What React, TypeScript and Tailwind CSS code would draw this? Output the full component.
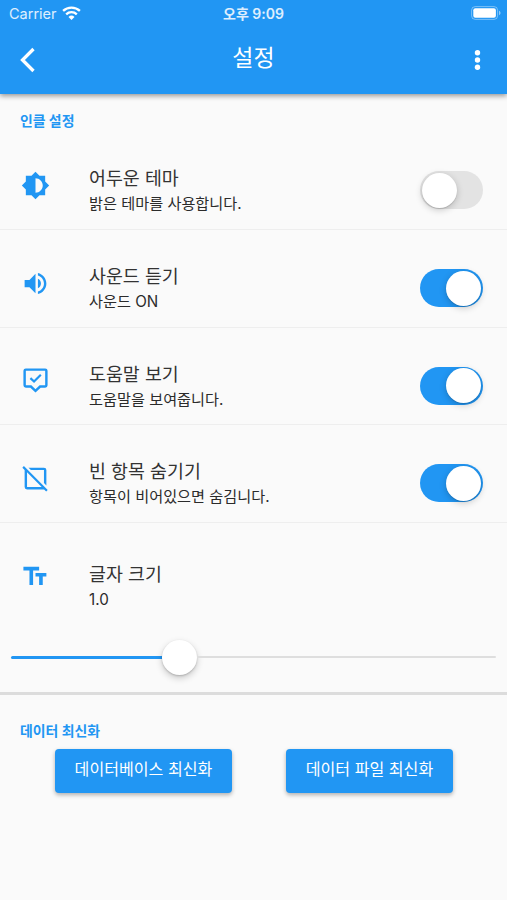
import { ReactNode, useState } from "react";
import clsx from "clsx";
import { MdBrightness6, MdVolumeUp } from "react-icons/md";

function TooltipCheckIcon() {
    return (
        <svg viewBox="0 0 24 24" className="size-[29px]" fill="none" stroke="currentColor" strokeWidth="2">
            <path d="M4 2.2h16a1 1 0 0 1 1 1v12a1 1 0 0 1-1 1h-4.2L12 19.8l-3.8-3.6H4a1 1 0 0 1-1-1v-12a1 1 0 0 1 1-1z" />
            <path d="M7.8 9.2l3 2.8 5.600-5.600" strokeWidth="1.8" />
        </svg>
    )
}

function SquareOffIcon() {
    return (
        <svg viewBox="0 0 24 24" className="size-[29px]" fill="currentColor">
            <path d="M2.39 1.73 1.11 3 3 4.9V19a2 2 0 0 0 2 2h14.1l1.74 1.73 1.27-1.27L2.39 1.73zM5 19V6.89L17.11 19H5zM8.2 5l-2-2H19a2 2 0 0 1 2 2v12.8l-2-2V5H8.2z" />
        </svg>
    )
}

function FormatSizeIcon() {
    return (
        <svg viewBox="0 0 24 24" className="size-[29px]" fill="currentColor">
            <path d="M2 4v3h5v12h3V7h5V4H2zm19 5h-9v3h3v7h3v-7h3V9z" />
        </svg>
    )
}

function StatusBar() {
    return (
        <div className="grid grid-cols-3 items-center h-[27px] px-[9px] text-[14.5px] text-white/85">
            <div className="flex items-center gap-[5px]">
                <span>Carrier</span>
                <svg viewBox="0 0 20 15" className="w-[19px] h-[14px] -translate-y-[1px] text-white" fill="none" stroke="currentColor" strokeWidth="2.5">
                    <path d="M1 5.3a13 13 0 0 1 18 0" />
                    <path d="M4.3 8.9a8.2 8.2 0 0 1 11.4 0" />
                    <path d="M10 15l-3.2-3.3a4.6 4.6 0 0 1 6.4 0z" fill="currentColor" stroke="none" />
                </svg>
            </div>
            <span className="text-center text-[14px] font-semibold whitespace-nowrap">오후 9:09</span>
            <svg viewBox="0 0 30 14" className="w-[30px] h-[14px] justify-self-end translate-x-[3px] -translate-y-[1px]">
                <rect x=".6" y=".6" width="26" height="12.8" rx="3.6" fill="none" stroke="#fff" strokeOpacity=".4" />
                <rect x="2.3" y="2.3" width="22.6" height="9.4" rx="2" fill="#fff" />
                <path d="M28 4.8v4.4c1-.4 1.5-1.2 1.5-2.2S29 5.2 28 4.8z" fill="#fff" fillOpacity=".5" />
            </svg>
        </div>
    )
}

function Header() {
    return (
        <header className="relative z-10 h-[94px] bg-[#2196f3] text-white shadow-[0_2px_5px_rgba(0,0,0,0.4)]">
            <StatusBar />
            <div className="grid grid-cols-3 items-center h-[65px] pl-[20px] pr-[26px]">
                <button aria-label="back">
                    <svg viewBox="0 0 16 26" className="w-[16px] h-[26px]" fill="none" stroke="currentColor" strokeWidth="3.3">
                        <path d="M13.5 2 2.5 13l11 11" />
                    </svg>
                </button>
                <h1 className="text-center text-[23px] leading-none translate-x-[3px] -translate-y-[1px]">설정</h1>
                <button aria-label="menu" className="justify-self-end">
                    <svg viewBox="0 0 7 20" className="w-[7px] h-[20px]" fill="currentColor">
                        <circle cx="3.5" cy="2.7" r="2.7" />
                        <circle cx="3.5" cy="10" r="2.7" />
                        <circle cx="3.5" cy="17.3" r="2.7" />
                    </svg>
                </button>
            </div>
        </header>
    )
}

function Switch({ on, onToggle }: { on: boolean, onToggle: () => void }) {
    return (
        <button
            role="switch"
            aria-checked={on}
            onClick={onToggle}
            className={clsx("flex items-center w-[62.5px] h-[38px] rounded-full px-[1.5px] shrink-0", on ? "justify-end bg-[#2196f3]" : "justify-start bg-[#e3e3e3]")}
        >
            <span className="size-[35px] rounded-full bg-white shadow-[0_2px_7px_rgba(0,0,0,0.2),0_1px_1px_rgba(0,0,0,0.12)]" />
        </button>
    )
}

function Tile({ icon, title, subtitle, children, className }: { icon: ReactNode, title: string, subtitle: string, children?: ReactNode, className?: string }) {
    return (
        <div className="flex pl-[20.5px] pr-[24.5px] pt-[33px]">
            <div className="w-[68.5px] pt-[6px] text-[#2196f3]">{icon}</div>
            <div className={clsx("flex-1", className)}>
                <h3 className="text-[18.4px] leading-[26px] text-[#333]">{title}</h3>
                <p className="text-[15.2px] leading-[26px] text-[#2b2b2b]">{subtitle}</p>
            </div>
            <div className="pt-[6px]">{children}</div>
        </div>
    )
}

const options = [
    { icon: <MdBrightness6 size={29} />, title: "어두운 테마", on: "어두운 테마를 사용합니다.", off: "밝은 테마를 사용합니다.", initial: false },
    { icon: <MdVolumeUp size={29} />, title: "사운드 듣기", on: "사운드 ON", off: "사운드 OFF", initial: true },
    { icon: <TooltipCheckIcon />, title: "도움말 보기", on: "도움말을 보여줍니다.", off: "도움말을 숨깁니다.", initial: true },
    { icon: <SquareOffIcon />, title: "빈 항목 숨기기", on: "항목이 비어있으면 숨김니다.", off: "항목이 비어있어도 보여줍니다.", initial: true },
]

export default function App() {
    const [values, setValues] = useState(options.map((o) => o.initial));

    const toggle = (index: number) => setValues(values.map((v, i) => (i === index ? !v : v)));

    return (
        <div className="w-full h-[900px] overflow-hidden bg-[#fafafa] font-['Inter','Noto_Sans_CJK_KR',sans-serif]">
            <Header />
            <h2 className="h-[38px] pl-[20px] pt-[17px] text-[13.9px] leading-[20px] font-bold text-[#2196f3]">인클 설정</h2>
            {options.map((option, i) => (
                <div key={option.title} className={clsx("border-b border-[#eee]", i === 0 ? "h-[98px]" : "h-[97.7px]")}>
                    <Tile icon={option.icon} title={option.title} subtitle={values[i] ? option.on : option.off}>
                        <Switch on={values[i]} onToggle={() => toggle(i)} />
                    </Tile>
                </div>
            ))}
            <div className="h-[112px]">
                <Tile icon={<FormatSizeIcon />} title="글자 크기" subtitle="1.0" className="pt-[5px]" />
            </div>
            <div className="flex items-center h-[44px] px-[11px]">
                <div className="w-[151px] h-[3px] rounded-l-full bg-[#2196f3]" />
                <div className="size-[35px] rounded-full bg-white shadow-[0_3px_7px_rgba(0,0,0,0.2),0_1px_2px_rgba(0,0,0,0.18)]" />
                <div className="flex-1 h-[2.5px] rounded-r-full bg-[#dedede]" />
            </div>
            <div className="mt-[13px] h-[3px] bg-[#dcdcdc]" />
            <h2 className="h-[54px] pl-[20px] pt-[26px] text-[13.9px] leading-[20px] font-bold text-[#2196f3]">데이터 최신화</h2>
            <div className="flex justify-between pl-[55px] pr-[54px] text-white text-[16.1px]">
                <button className="w-[177px] h-[44px] pb-[3px] rounded-[4px] bg-[#2196f3] shadow-[0_2px_4px_rgba(0,0,0,0.3)]">데이터베이스 최신화</button>
                <button className="w-[167px] h-[44px] pb-[3px] rounded-[4px] bg-[#2196f3] shadow-[0_2px_4px_rgba(0,0,0,0.3)]">데이터 파일 최신화</button>
            </div>
        </div>
    )
}
